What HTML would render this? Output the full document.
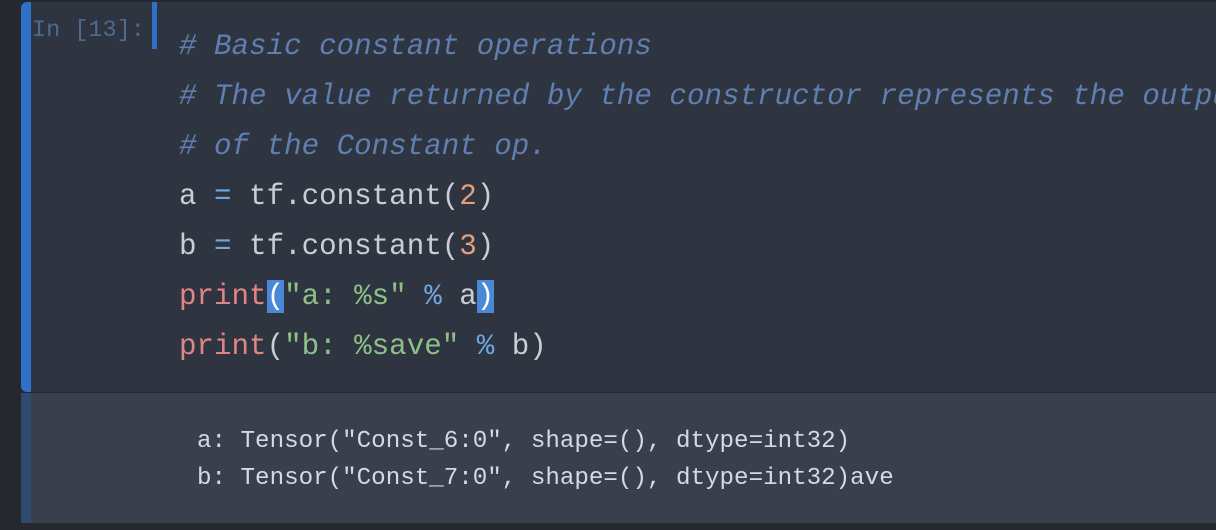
<!DOCTYPE html>
<html><head><meta charset="utf-8"><style>
html,body{margin:0;padding:0;width:1216px;height:530px;overflow:hidden;background:#25282f;}
.in{position:absolute;left:21px;top:2px;width:1195px;height:390px;background:#2f3441;border-radius:6px 0 0 6px;}
.bar{position:absolute;left:21px;top:2px;width:10px;height:390px;background:#3070c8;border-radius:6px 0 0 6px;}
.out{position:absolute;left:21px;top:393px;width:1195px;height:130px;background:#3a3f4e;}
.obar{position:absolute;left:21px;top:393px;width:10px;height:130px;background:#2f4a70;}
.prompt{position:absolute;left:32px;top:17px;font:23.5px "Liberation Mono",monospace;color:#4f6a8f;line-height:28px;}
.pbar{position:absolute;left:152px;top:2px;width:5px;height:47px;background:#3070c8;}
.code{position:absolute;left:179px;top:22px;font:29.2px "Liberation Mono",monospace;line-height:50px;color:#c8cdd8;white-space:pre;}
.c{color:#5f7fb0;font-style:italic}
.n{color:#e0a080}.p{color:#e08585}.s{color:#8fc088}.o{color:#6fa8e0}
.h{background:#4a88d8;color:#fff}
.output{position:absolute;left:197px;top:423px;font:24.2px "Liberation Mono",monospace;line-height:37px;color:#d5d9e2;white-space:pre;}
</style></head><body>
<div class="in"></div><div class="bar"></div>
<div class="out"></div><div class="obar"></div>
<div class="prompt">In [13]:</div><div class="pbar"></div>
<div class="code"><span class="c"># Basic constant operations</span>
<span class="c"># The value returned by the constructor represents the output</span>
<span class="c"># of the Constant op.</span>
a <span class="o">=</span> tf.constant(<span class="n">2</span>)
b <span class="o">=</span> tf.constant(<span class="n">3</span>)
<span class="p">print</span><span class="h">(</span><span class="s">"a: %s"</span> <span class="o">%</span> a<span class="h">)</span>
<span class="p">print</span>(<span class="s">"b: %save"</span> <span class="o">%</span> b)</div>
<div class="output">a: Tensor("Const_6:0", shape=(), dtype=int32)
b: Tensor("Const_7:0", shape=(), dtype=int32)ave</div>
</body></html>
